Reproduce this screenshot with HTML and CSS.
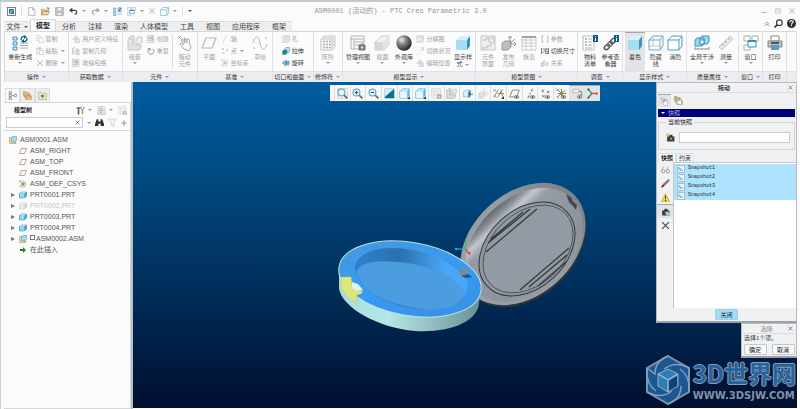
FILE: index.html
```html
<!DOCTYPE html>
<html lang="zh-CN">
<head>
  <meta charset="UTF-8">
  <title>ASM0001 (活动的) - PTC Creo Parametric 3.0</title>
  <link rel="stylesheet" href="styles.css">
</head>
<body>

<!-- icon set -->
<svg class="sprite" aria-hidden="true">
  <symbol id="i-app" viewBox="0 0 16 16"><rect x="1" y="1" width="14" height="14" fill="#fff" stroke="#667" stroke-width="1.5"/><rect x="4" y="4" width="8" height="8" fill="#2d9fd8" stroke="#234a70"/><path d="M4 12l4-4" stroke="#fff"/></symbol>
  <symbol id="i-new" viewBox="0 0 16 16"><path d="M3 1h7l4 4v10H3zM10 1v4h4" fill="#fff" stroke="#888"/></symbol>
  <symbol id="i-open" viewBox="0 0 16 16"><path d="M1 14V4h4l2 2h6v3" fill="#f4c878" stroke="#8f7040"/><path d="M1 14l3-6h11l-3 6z" fill="#f9d894" stroke="#8f7040"/><path d="M9 3c2-3 4-2 5 0m0-2v3h-3" fill="none" stroke="#555"/></symbol>
  <symbol id="i-save" viewBox="0 0 16 16"><path d="M1 1h14v14H1z" fill="#c9cbcd" stroke="#999"/><path d="M4 1h8v6H4zM4 10h8v5H4z" fill="#f4f4f4" stroke="#999"/></symbol>
  <symbol id="i-undo" viewBox="0 0 16 16"><path d="M3 6h7c5 0 5 7 0 7" fill="none" stroke="#3b3f45" stroke-width="2"/><path d="M0 6l6-5v9z" fill="#3b3f45"/></symbol>
  <symbol id="i-redo" viewBox="0 0 16 16"><path d="M13 6H6c-5 0-5 7 0 7" fill="none" stroke="#aaa" stroke-width="2"/><path d="M16 6l-6-5v9z" fill="#aaa"/></symbol>
  <symbol id="i-regen" viewBox="0 0 16 16"><path d="M1 2h4v3H1zM1 7h4v3H1zM1 12h4v3H1z" fill="#d4effb" stroke="#3890bd"/><path d="M8 8h8M8 10.5h8M8 13h8" stroke="#a5aaae"/><path d="M9 5c0-4 3-4 4-3M15 3c0 4-3 4-5 3" fill="none" stroke="#08618c" stroke-width="1.3"/><path d="M12 0l3 2-3 2zM12 4l-3 2 3 2z" fill="#08618c"/></symbol>
  <symbol id="i-copy" viewBox="0 0 16 16"><path d="M1 1h7l2 2v8H1z" fill="#f3f3f3" stroke="#b3b5b8"/><path d="M6 6h6l3 3v6H6z" fill="#fff" stroke="#9c9fa3"/></symbol>
  <symbol id="i-paste" viewBox="0 0 16 16"><path d="M1 3h11v11H1zM4 1h5v3H4z" fill="#eee" stroke="#aaa"/><path d="M7 7h8v8H7z" fill="#fff" stroke="#999"/></symbol>
  <symbol id="i-x" viewBox="0 0 16 16"><path d="M2 2l12 12M14 2L2 14" stroke="currentColor" stroke-width="2"/></symbol>
  <symbol id="i-feature" viewBox="0 0 16 16"><path d="M1 8h5V4h5v4M5 1l4 3-4 4" fill="none" stroke="#aaa" stroke-width="1.5"/><path d="M6 8h9v7H6z" fill="#ddd" stroke="#aaa"/></symbol>
  <symbol id="i-geom" viewBox="0 0 16 16"><path d="M1 15V2h7M4 5v9M8 6h6v9H8zM11 2v8M8 12h6" fill="none" stroke="#a0a3a6" stroke-width="1.5"/></symbol>
  <symbol id="i-shrink" viewBox="0 0 16 16"><path d="M1 1h13v14H1z" fill="#eee" stroke="#999"/><path d="M4 4h5v4H4zM4 11h5M11 3v9" fill="none" stroke="#888" stroke-width="1.5"/></symbol>
  <symbol id="i-assemble" viewBox="0 0 16 16"><path d="M1 4l3-3h3v9h7v3l-2 2H1z" fill="#d8dadc" stroke="#b2b5b8"/><path d="M9 4l2-2h4v5l-2 2H9zM1 4h4v7" fill="#ececec" stroke="#b2b5b8"/></symbol>
  <symbol id="i-repeat" viewBox="0 0 16 16"><path d="M4 4a6 6 0 1 0 8 0" fill="none" stroke="#777" stroke-width="2"/><path d="M1 2h6v6z" fill="#777"/></symbol>
  <symbol id="i-hand" viewBox="0 0 16 16"><path d="M7 14L3 9l1-1 3 2-3-5 1-1 3 4-1-5h1l2 5v-4h2l1 6 1 2-2 4z" fill="#fff" stroke="#888"/><path d="M1 1l3 3M4 1L1 4" stroke="#888"/></symbol>
  <symbol id="i-plane" viewBox="0 0 16 16"><path d="M5 3h10l-4 10H1z" fill="none" stroke="currentColor" stroke-width="1.2"/></symbol>
  <symbol id="i-axis" viewBox="0 0 16 16"><path d="M4 15l2-4M7 9l1-2M9 5l2-4" stroke="currentColor" stroke-width="1.5"/></symbol>
  <symbol id="i-point" viewBox="0 0 16 16"><path d="M2 2l4 4M6 2L2 6M10 4l4 4M14 4l-4 4M3 10l4 4M7 10l-4 4" stroke="currentColor" stroke-width="1.3"/></symbol>
  <symbol id="i-csys" viewBox="0 0 16 16"><path d="M8 8V1M8 8l6-5M8 8h7M8 8l5 6M8 8v7M8 8l-6 5M8 8H3M8 8L3 3M1 1l3 3M4 1L1 4M1 12l3 3" stroke="currentColor" stroke-width="1.3" fill="none"/></symbol>
  <symbol id="i-datums" viewBox="0 0 16 16"><path d="M1 2l3 3M4 2L1 5M1 14L8 2M6 14l8-12M7 8h9M11 4l4 10M1 10l3 3" stroke="currentColor" stroke-width="1.2" fill="none"/></symbol>
  <symbol id="i-sketch" viewBox="0 0 16 16"><path d="M1 8C3-1 7 1 8 8s5 9 7 1" fill="none" stroke="#999"/><path d="M1 13h2M13 3h2" stroke="#999"/></symbol>
  <symbol id="i-hole" viewBox="0 0 16 16"><path d="M1 4l3-3h11v11l-3 3H1zM1 4h11v11M12 4l3-3" fill="#eee" stroke="#aaa"/><path d="M5 5v9M8 5v9" stroke="#aaa"/></symbol>
  <symbol id="i-extrude" viewBox="0 0 16 16"><path d="M5 4l3-3h7v8l-3 3H5z" fill="#b9e4f6" stroke="#447f9d"/><path d="M1 8l3-2h6v6l-3 3H1z" fill="#1686bb" stroke="#55707d"/></symbol>
  <symbol id="i-revolve" viewBox="0 0 16 16"><path d="M6 3l4 5-4 5-5-5zM9 4h5v8H9z" fill="#8fd0ed" stroke="#39799a"/><path d="M8 1v14M1 8h14" stroke="#277ba3"/></symbol>
  <symbol id="i-cut" viewBox="0 0 16 16"><path d="M2 6l3-3h7v7l-3 3H2z" fill="#d5f0fb" stroke="#7fb3c9"/><path d="M12 3v10l-3 1V6z" fill="#2a7fa3"/><path d="M16 9h-5m2-2l-2 2 2 2" fill="none" stroke="#444"/></symbol>
  <symbol id="i-pattern" viewBox="0 0 16 16"><path d="M1 4l3-3h11v11l-3 3H1z" fill="#ddd" stroke="#c0c0c0"/><path d="M1 4h11v11H1z" fill="#f4f4f4" stroke="#c0c0c0"/><path d="M3 6.5h2M6 6.5h2M9 6.5h2M3 9.5h2M6 9.5h2M9 9.5h2M3 12.5h2M6 12.5h2M9 12.5h2" stroke="#999" stroke-width="1.5"/></symbol>
  <symbol id="i-viewmgr" viewBox="0 0 16 16"><path d="M1 1h13v13H1zM1 4h13M4 4v10M4 7h10M4 10h10" fill="#fafafa" stroke="#b0b3b6"/><path d="M9 10h6v5H9zM11 9h2" fill="#777" stroke="#777"/><circle cx="12" cy="12.5" r="1.3" fill="#ddd"/></symbol>
  <symbol id="i-section" viewBox="0 0 16 16"><path d="M1 7l7-6h7v9l-5 5H1z" fill="#eee" stroke="#bbb"/><path d="M1 7h8v8H1z" fill="#ccc"/><path d="M9 7l6-6v9l-6 5z" fill="#ddd"/></symbol>
  <symbol id="i-sphere" viewBox="0 0 16 16"><circle cx="8" cy="8" r="7.7" fill="url(#ball)"/></symbol>
  <symbol id="i-cube" viewBox="0 0 16 16"><path d="M1 5l4-4h10v10l-3 4H1z" fill="#5fb7df"/><path d="M1 5l4-4h10l-3 4z" fill="#bceaf9"/><path d="M1 5h11v10H1z" fill="#e6f7fd"/><path d="M1 5l4-4h10v10l-3 4H1z" fill="none" stroke="#58a7cb" stroke-width=".7"/></symbol>
  <symbol id="i-shaded" viewBox="0 0 16 16"><path d="M1 5l4-4h10l-3 4z" fill="#d3f2fc"/><path d="M1 5h11v10H1z" fill="#a5def3"/><path d="M12 5l3-4v10l-3 4z" fill="#3a94b8"/></symbol>
  <symbol id="i-wire" viewBox="0 0 16 16"><path d="M1 5l4-4h10v10l-3 4H1zM1 5h11v10M12 5l3-4" fill="none" stroke="#6aaecb"/><path d="M5 1v10H1m4 0h10" fill="none" stroke="#b5b5b5" stroke-width=".7"/></symbol>
  <symbol id="i-nohid" viewBox="0 0 16 16"><path d="M1 5l4-4h10v10l-3 4H1zM1 5h11v10M12 5l3-4" fill="#fff" stroke="#4f9fc3"/></symbol>
  <symbol id="i-iface" viewBox="0 0 16 16"><path d="M1 1h14v14H1z" fill="#ebebeb" stroke="#b6b8ba"/><path d="M2 5h4V3h3v4h2v4H7v2H2M10 3h4v6" fill="none" stroke="#aaa"/></symbol>
  <symbol id="i-publish" viewBox="0 0 16 16"><path d="M1 8l3-2h6v6l-3 3H1z" fill="#aaa" stroke="#777"/><path d="M9 9h6M9 9V1M9 9l5-5M7 3l2-2 2 2M13 7l2 2-2 2" fill="none" stroke="#777"/></symbol>
  <symbol id="i-table" viewBox="0 0 16 16"><path d="M1 2h14v13H1zM1 5h14M1 8h14M1 11h14M5 2v13M10 2v13" fill="#fff" stroke="#bbb"/><path d="M1 2h14" stroke="#888" stroke-width="2"/></symbol>
  <symbol id="i-param" viewBox="0 0 16 16"><path d="M5 2H2v12h3M11 2h3v12h-3" fill="none" stroke="#888" stroke-width="1.5"/></symbol>
  <symbol id="i-dims" viewBox="0 0 16 16"><path d="M1 2v12M15 2v12M3 4h10M3 12l9-9M9 8h5v5H9z" fill="none" stroke="#555" stroke-width="1.5"/></symbol>
  <symbol id="i-rel" viewBox="0 0 16 16"><path d="M6 2v12M6 8H1v6h5M9 8h6M9 12h6" fill="none" stroke="#888" stroke-width="1.5"/></symbol>
  <symbol id="i-bom" viewBox="0 0 16 16"><path d="M1 1h11v14H1z" fill="#fff" stroke="#bbb"/><path d="M3 4h2M3 7h2M3 10h2" stroke="#258bb7"/><path d="M6 4h4M6 7h4M6 10h4M3 13h7" stroke="#aaa"/><path d="M11 0h5v7h-5z" fill="#075f82"/><path d="M13.5 1v1m0 1v3" stroke="#fff"/></symbol>
  <symbol id="i-chain" viewBox="0 0 16 16"><ellipse cx="4" cy="12" rx="3" ry="2" transform="rotate(-45 4 12)" fill="none" stroke="#555" stroke-width="1.5"/><ellipse cx="7" cy="9" rx="3" ry="2" transform="rotate(-45 7 9)" fill="none" stroke="#777" stroke-width="1.5"/><ellipse cx="10" cy="6" rx="3" ry="2" transform="rotate(-45 10 6)" fill="none" stroke="#555" stroke-width="1.5"/><path d="M11 0h5v7h-5z" fill="#075f82"/><path d="M13.5 1v1m0 1v3" stroke="#fff"/></symbol>
  <symbol id="i-clash" viewBox="0 0 16 16"><path d="M1 5l2-2h7v6l-2 2H1zM6 3l2-2h7v6l-2 2H6z" fill="#98d9f1" stroke="#3c93b9"/><path d="M6 5h4v4H6z" fill="#fff" stroke="#3c93b9"/><path d="M1 14h14M1 12v3M4 13v2M8 13v2M12 13v2M15 12v3" stroke="#999"/></symbol>
  <symbol id="i-ruler" viewBox="0 0 16 16"><path d="M1 12L12 1l3 3L4 15z" fill="#e9e9e9" stroke="#c5c5c5"/><path d="M4 9l2 2M7 6l2 2M10 3l2 2" stroke="#aaa"/></symbol>
  <symbol id="i-windows" viewBox="0 0 16 16"><path d="M1 1h6v5H1zM9 1h6v5H9zM1 10h6v5H1z" fill="#fff" stroke="#aaa"/><path d="M5 6h8v6H5z" fill="#f4fbff" stroke="#2f91bc"/><path d="M5 6h8" stroke="#2f91bc" stroke-width="2"/></symbol>
  <symbol id="i-print" viewBox="0 0 16 16"><path d="M4 1h8v5H4z" fill="#fff" stroke="#888"/><path d="M1 6h14v6H1z" fill="#b8bcc0" stroke="#888"/><path d="M4 8h8" stroke="#555" stroke-width="2"/><path d="M4 10h8v5H4z" fill="#4fa0c4"/></symbol>
  <symbol id="i-asm" viewBox="0 0 16 16"><path d="M1 3h9v10h4v2H1z" fill="#f6d590" stroke="#a88c4e"/><path d="M5 4l2-3h8v8l-3 3H5z" fill="#9bdbf5" stroke="#4b91b2"/></symbol>
  <symbol id="i-part" viewBox="0 0 16 16"><path d="M1 5l4-3h10v8l-4 4H1z" fill="#3a96be"/><path d="M1 5h10v9H1z" fill="#8fdbfa"/><path d="M1 5l4-3h10l-4 3z" fill="#d5f5ff"/><path d="M1 5l4-3h10v8l-4 4H1z" fill="none" stroke="#3785a6"/></symbol>
  <symbol id="i-insert" viewBox="0 0 16 16"><path d="M2 6h6V2l6 6-6 6v-4H2z" fill="#159315"/><path d="M2 6h3v4H2z" fill="#0b5c0b"/></symbol>
  <symbol id="i-tree" viewBox="0 0 16 16"><path d="M4 2v12M4 8h7" stroke="#777"/><path d="M2 0h4v4H2zM2 6h4v4H2zM2 12h4v4H2zM11 6h4v4h-4z" fill="#fff" stroke="#555"/></symbol>
  <symbol id="i-folders" viewBox="0 0 16 16"><path d="M1 1h4l1 2h5v6H1zM3 4h4l1 2h5v6H3zM5 8h4l1 1h5v6H5z" fill="#f7d38a" stroke="#a58a55"/></symbol>
  <symbol id="i-fav" viewBox="0 0 16 16"><path d="M1 2h5l2 2h7v11H1z" fill="#f9e5b5" stroke="#b79c61"/><path d="M5 9h6M8 6v6" stroke="#258bb7" stroke-width="2.5"/></symbol>
  <symbol id="i-tools" viewBox="0 0 16 16"><path d="M1 2h7v3H6v10H3V5H1z" fill="#666"/><path d="M10 7h3v8h-3z" fill="#d79b45"/><path d="M9 1v4l2 2 3-2V1" fill="none" stroke="#777" stroke-width="1.5"/></symbol>
  <symbol id="i-sheet" viewBox="0 0 16 16"><path d="M2 1h9l3 3v11H2z" fill="#f1f4f6" stroke="#9aa0a5"/><path d="M4 5h8M4 8h8M4 11h8M7 4v10" stroke="#8ba0ad"/></symbol>
  <symbol id="i-find" viewBox="0 0 16 16"><path d="M3 2h3v4h4V2h3l3 9v3h-6v-4H6v4H0v-3z" fill="#333"/></symbol>
  <symbol id="i-filter" viewBox="0 0 16 16"><path d="M1 2h14l-5 6v7l-4-2V8z" fill="#f6f6f6" stroke="#bbb"/></symbol>
  <symbol id="i-plus" viewBox="0 0 16 16"><path d="M1 8h14M8 1v14" stroke="#999" stroke-width="3"/></symbol>
  <symbol id="i-lens" viewBox="0 0 16 16"><path d="M10 10l5 5" stroke="#566b78" stroke-width="2.5"/><circle cx="6.5" cy="6.5" r="5" fill="#e5f5fb" stroke="#5d9db9" stroke-width="1.5"/></symbol>
  <symbol id="i-refit" viewBox="0 0 16 16"><path d="M1 1h14v14H1z" fill="none" stroke="#bbb"/></symbol>
  <symbol id="i-plusmark" viewBox="0 0 16 16"><path d="M4 6.5h5M6.5 4v5" stroke="#08618c" stroke-width="1.6"/></symbol>
  <symbol id="i-minusmark" viewBox="0 0 16 16"><path d="M4 6.5h5" stroke="#08618c" stroke-width="1.6"/></symbol>
  <symbol id="i-repaint" viewBox="0 0 16 16"><path d="M1 1h14v14H1z" fill="#0c6f9b"/><path d="M1 1h14L1 13z" fill="#d7edf5"/></symbol>
  <symbol id="i-eye" viewBox="0 0 16 16"><path d="M7 13c2-3 6-3 8 0-2 3-6 3-8 0" fill="#eee" stroke="#666"/><circle cx="11" cy="13" r="1.5" fill="#444"/></symbol>
  <symbol id="i-more" viewBox="0 0 16 16"><path d="M16 12v4h-4z" fill="#222"/></symbol>
  <symbol id="i-triad" viewBox="0 0 16 16"><path d="M7 8h7" stroke="#d45048" stroke-width="2"/><path d="M7 8L2 2" stroke="#5a8c3c" stroke-width="2"/><path d="M7 8l-5 6" stroke="#28809a" stroke-width="2"/><circle cx="2" cy="2" r="1.5" fill="#555"/><circle cx="2" cy="14" r="1.5" fill="#555"/><circle cx="14" cy="8" r="1.8" fill="#d45048"/></symbol>
  <symbol id="i-note" viewBox="0 0 16 16"><path d="M1 2h9v5H1z" fill="#fbf2d3" stroke="#aaa"/><path d="M10 5h4v5m-3 0h4" fill="none" stroke="#666"/></symbol>
  <symbol id="i-camera" viewBox="0 0 16 16"><path d="M2 6h3l2-3h4l1 3h3v9H2z" fill="#3c3c3e"/><circle cx="9" cy="10" r="3" fill="#999" stroke="#222"/></symbol>
  <symbol id="i-drawing" viewBox="0 0 16 16"><path d="M9 9h7v7H9z" fill="#9fdaf2" stroke="#4f8ba3"/><path d="M9 9h3v3H9z" fill="#f5c66c"/></symbol>
  <symbol id="i-spark" viewBox="0 0 16 16"><path d="M3 0v6M0 3h6M1 1l4 4M5 1L1 5" stroke="#f0a020"/></symbol>
  <symbol id="i-glasses" viewBox="0 0 16 16"><circle cx="4" cy="11" r="3" fill="none" stroke="#888" stroke-width="1.3"/><circle cx="12" cy="11" r="3" fill="none" stroke="#888" stroke-width="1.3"/><path d="M1 11L4 3M9 11l4-8" fill="none" stroke="#888"/></symbol>
  <symbol id="i-pencil" viewBox="0 0 16 16"><path d="M1 15l2-5L13 1l2 2-9 9z" fill="#b56a62" stroke="#6b4a48"/><path d="M1 15l2-5 3 2z" fill="#333"/></symbol>
  <symbol id="i-warn" viewBox="0 0 16 16"><path d="M8 1l7 14H1z" fill="#ffd248" stroke="#c39018"/><path d="M8 5v5m0 2v2" stroke="#333" stroke-width="1.8"/></symbol>
  <symbol id="i-snap" viewBox="0 0 16 16"><path d="M1 1h14v14H1z" fill="#e8f7fd" stroke="#6897a8"/><path d="M4 4v4h4M8 8l4 4M5 11h3" fill="none" stroke="#4f7480" stroke-width="1.3"/></symbol>
  <symbol id="i-min" viewBox="0 0 16 16"><path d="M1 12h14" stroke="#bbb" stroke-width="3"/></symbol>
  <symbol id="i-max" viewBox="0 0 16 16"><path d="M1 2h14v12H1zM1 5h14M4 9h8" fill="none" stroke="#bbb" stroke-width="1.6"/></symbol>
  <symbol id="i-close" viewBox="0 0 16 16"><path d="M1 2h14v12H1z" fill="none" stroke="#bbb"/><path d="M4 4l8 8M12 4l-8 8" stroke="#999" stroke-width="2"/></symbol>
  <symbol id="i-up" viewBox="0 0 16 16"><path d="M2 8l6-5 6 5M2 13l6-5 6 5" fill="none" stroke="#666" stroke-width="1.5"/></symbol>
  <symbol id="i-search" viewBox="0 0 16 16"><path d="M6 10l-5 5" stroke="#333" stroke-width="3"/><circle cx="9.500" cy="6.500" r="5" fill="#fff" stroke="#333" stroke-width="2"/></symbol>
  <symbol id="i-help" viewBox="0 0 16 16"><circle cx="8" cy="8" r="8" fill="#2b2b2d"/><path d="M5 6c0-4 6-4 6-1 0 2-3 2-3 5m0 1v2" fill="none" stroke="#fff" stroke-width="2"/></symbol>
  <defs>
    <radialGradient id="ball" cx=".35" cy=".3" r=".7"><stop offset="0" stop-color="#eee"/><stop offset=".4" stop-color="#888"/><stop offset="1" stop-color="#2b2b2b"/></radialGradient>
  </defs>
</svg>

<div class="app">
  <header class="titlebar">
    <div class="quick">
      <button aria-label="应用"><svg class="ico"><use href="#i-app"/></svg></button>
      <span class="rule"></span>
      <button aria-label="新建"><svg class="ico"><use href="#i-new"/></svg></button>
      <button aria-label="打开"><svg class="ico"><use href="#i-open"/></svg></button>
      <button aria-label="保存"><svg class="ico"><use href="#i-save"/></svg></button>
      <button aria-label="撤消"><svg class="ico"><use href="#i-undo"/></svg><i class="arrow"></i></button>
      <button aria-label="重做"><svg class="ico"><use href="#i-redo"/></svg><i class="arrow"></i></button>
      <button aria-label="重新生成"><svg class="ico"><use href="#i-regen"/></svg></button>
      <button aria-label="窗口"><svg class="ico"><use href="#i-windows"/></svg><i class="arrow"></i></button>
      <button aria-label="关闭窗口"><svg class="ico small"><use href="#i-close"/></svg></button>
      <button aria-label="显示"><svg class="ico"><use href="#i-nohid"/></svg><i class="arrow"></i></button>
      <span class="rule"></span>
      <button aria-label="自定义"><i class="arrow dark"></i></button>
    </div>
    <h1 class="title">ASM0001 (活动的) - PTC Creo Parametric 3.0</h1>
    <div class="winbtns">
      <button aria-label="最小化"><svg class="ico small"><use href="#i-min"/></svg></button>
      <button aria-label="最大化"><svg class="ico small"><use href="#i-max"/></svg></button>
      <button aria-label="关闭"><svg class="ico small"><use href="#i-close"/></svg></button>
    </div>
  </header>

  <nav class="tabs">
    <button class="tab file">文件<i class="arrow dark"></i></button>
    <button class="tab active">模型</button>
    <button class="tab">分析</button>
    <button class="tab">注释</button>
    <button class="tab">渲染</button>
    <button class="tab wide">人体模型</button>
    <button class="tab">工具</button>
    <button class="tab">视图</button>
    <button class="tab wide">应用程序</button>
    <button class="tab">框架</button>
    <div class="help">
      <button aria-label="最小化功能区"><svg class="ico small"><use href="#i-up"/></svg></button>
      <button aria-label="搜索"><svg class="ico"><use href="#i-search"/></svg></button>
      <button aria-label="帮助"><svg class="ico"><use href="#i-help"/></svg></button>
    </div>
  </nav>

  <div class="ribbon">
    <section class="group">
      <div class="tools">
        <button class="big on"><svg><use href="#i-regen"/></svg>重新生成<i class="arrow"></i></button>
        <div class="stack">
          <button><svg><use href="#i-copy"/></svg>复制</button>
          <button><svg><use href="#i-paste"/></svg>粘贴<i class="arrow"></i></button>
          <button><svg><use href="#i-x"/></svg>删除<i class="arrow"></i></button>
        </div>
      </div>
      <button class="caption">操作<i class="arrow"></i></button>
    </section>
    <section class="group">
      <div class="tools">
        <div class="stack">
          <button><svg><use href="#i-feature"/></svg>用户定义特征</button>
          <button><svg><use href="#i-geom"/></svg>复制几何</button>
          <button><svg><use href="#i-shrink"/></svg>收缩包络</button>
        </div>
      </div>
      <button class="caption">获取数据<i class="arrow"></i></button>
    </section>
    <section class="group">
      <div class="tools">
        <button class="big"><svg><use href="#i-assemble"/></svg>组装<i class="arrow"></i></button>
        <div class="stack">
          <button><svg><use href="#i-shrink"/></svg>创建</button>
          <button><svg><use href="#i-repeat"/></svg>重复</button>
        </div>
        <span class="rule tall"></span>
        <button class="big"><svg><use href="#i-hand"/></svg>拖动<br>元件</button>
      </div>
      <button class="caption">元件<i class="arrow"></i></button>
    </section>
    <section class="group">
      <div class="tools">
        <button class="big"><svg><use href="#i-plane"/></svg>平面</button>
        <div class="stack">
          <button><svg><use href="#i-axis"/></svg>轴</button>
          <button><svg><use href="#i-point"/></svg>点<i class="arrow"></i></button>
          <button><svg><use href="#i-csys"/></svg>坐标系</button>
        </div>
        <button class="big"><svg><use href="#i-sketch"/></svg>草绘</button>
      </div>
      <button class="caption">基准<i class="arrow"></i></button>
    </section>
    <section class="group">
      <div class="tools">
        <div class="stack">
          <button><svg><use href="#i-hole"/></svg>孔</button>
          <button class="on"><svg><use href="#i-extrude"/></svg>拉伸</button>
          <button class="on"><svg><use href="#i-revolve"/></svg>旋转</button>
        </div>
      </div>
      <button class="caption">切口和曲面<i class="arrow"></i></button>
    </section>
    <section class="group">
      <div class="tools">
        <button class="big"><svg><use href="#i-pattern"/></svg>阵列<i class="arrow"></i></button>
      </div>
      <button class="caption">修饰符<i class="arrow"></i></button>
    </section>
    <section class="group">
      <div class="tools">
        <button class="big on"><svg><use href="#i-viewmgr"/></svg>管理视图<i class="arrow"></i></button>
        <button class="big"><svg><use href="#i-section"/></svg>截面<i class="arrow"></i></button>
        <button class="big on"><svg><use href="#i-sphere"/></svg>外观库<i class="arrow"></i></button>
        <div class="stack">
          <button><svg><use href="#i-iface"/></svg>分解图</button>
          <button><svg><use href="#i-bom" opacity=".3"/></svg>切换状况</button>
          <button><svg><use href="#i-feature"/></svg>编辑位置</button>
        </div>
        <button class="big on"><svg><use href="#i-shaded"/></svg>显示样<br><span>式<i class="arrow"></i></span></button>
      </div>
      <button class="caption">模型显示<i class="arrow"></i></button>
    </section>
    <section class="group">
      <div class="tools">
        <button class="big"><svg><use href="#i-iface"/></svg>元件<br>界面</button>
        <button class="big"><svg><use href="#i-publish"/></svg>发布<br>几何</button>
        <button class="big"><svg><use href="#i-table"/></svg>族表</button>
        <div class="stack">
          <button><svg><use href="#i-param"/></svg>参数</button>
          <button class="on"><svg><use href="#i-dims"/></svg>切换尺寸</button>
          <button><svg><use href="#i-rel"/></svg>关系</button>
        </div>
      </div>
      <button class="caption">模型意图<i class="arrow"></i></button>
    </section>
    <section class="group">
      <div class="tools">
        <button class="big on"><svg><use href="#i-bom"/></svg>物料<br>清单</button>
        <button class="big on"><svg><use href="#i-chain"/></svg>参考查<br>看器</button>
      </div>
      <button class="caption">调查<i class="arrow"></i></button>
    </section>
    <section class="group">
      <div class="tools">
        <button class="big on pressed"><svg><use href="#i-shaded"/></svg>着色</button>
        <button class="big on"><svg><use href="#i-wire"/></svg>隐藏<br>线</button>
        <button class="big on"><svg><use href="#i-nohid"/></svg>消隐</button>
      </div>
      <button class="caption">显示样式<i class="arrow"></i></button>
    </section>
    <section class="group">
      <div class="tools">
        <button class="big on"><svg><use href="#i-clash"/></svg>全局干涉<i class="arrow"></i></button>
        <button class="big on"><svg><use href="#i-ruler"/></svg>测量<i class="arrow"></i></button>
      </div>
      <button class="caption">质量属性<i class="arrow"></i></button>
    </section>
    <section class="group">
      <div class="tools">
        <button class="big on"><svg><use href="#i-windows"/></svg>窗口<i class="arrow"></i></button>
      </div>
      <button class="caption">窗口<i class="arrow"></i></button>
    </section>
    <section class="group">
      <div class="tools">
        <button class="big on"><svg><use href="#i-print"/></svg>打印</button>
      </div>
      <button class="caption">打印</button>
    </section>
    <section class="group">
      <div class="tools"></div>
      <div class="caption"></div>
    </section>
  </div>

  <main class="work">
    <aside class="side">
      <div class="sidetabs">
        <button class="active" aria-label="模型树"><svg class="ico"><use href="#i-tree"/></svg></button>
        <button aria-label="文件夹"><svg class="ico"><use href="#i-folders"/></svg></button>
        <button aria-label="收藏夹"><svg class="ico"><use href="#i-fav"/></svg></button>
      </div>
      <div class="sidebody">
        <div class="sidehead">
          <h2>模型树</h2>
          <button aria-label="设置"><svg class="ico"><use href="#i-tools"/></svg><i class="arrow"></i></button>
          <button aria-label="显示"><svg class="ico"><use href="#i-sheet"/></svg><i class="arrow"></i></button>
          <button aria-label="树列"><svg class="ico"><use href="#i-viewmgr" opacity=".5"/></svg></button>
        </div>
        <div class="sidesearch">
          <div class="searchbox">
            <input type="text" aria-label="搜索模型树">
            <button aria-label="清除"><svg class="tiny"><use href="#i-x"/></svg></button>
          </div>
          <button aria-label="选项"><i class="arrow"></i></button>
          <button aria-label="查找"><svg class="ico"><use href="#i-find"/></svg></button>
          <button aria-label="过滤"><svg class="ico"><use href="#i-filter"/></svg></button>
          <button aria-label="添加"><svg class="ico small"><use href="#i-plus"/></svg></button>
        </div>
        <ul class="tree">
          <li class="root"><svg class="ico"><use href="#i-asm"/></svg>ASM0001.ASM</li>
          <li><i></i><svg class="ico datum"><use href="#i-plane"/></svg>ASM_RIGHT</li>
          <li><i></i><svg class="ico datum"><use href="#i-plane"/></svg>ASM_TOP</li>
          <li><i></i><svg class="ico datum"><use href="#i-plane"/></svg>ASM_FRONT</li>
          <li><i></i><svg class="ico datum"><use href="#i-csys"/></svg>ASM_DEF_CSYS</li>
          <li><i class="twist"></i><svg class="ico"><use href="#i-part"/></svg>PRT0001.PRT</li>
          <li class="off"><i class="twist"></i><svg class="ico"><use href="#i-part"/></svg><span>PRT0002.PRT</span></li>
          <li><i class="twist"></i><svg class="ico"><use href="#i-part"/></svg>PRT0003.PRT</li>
          <li><i class="twist"></i><svg class="ico"><use href="#i-part"/></svg>PRT0004.PRT</li>
          <li><i class="twist"></i><svg class="ico"><use href="#i-asm"/></svg><span class="placed">ASM0002.ASM</span></li>
          <li><i></i><svg class="ico"><use href="#i-insert"/></svg>在此插入</li>
        </ul>
      </div>
    </aside>

    <div class="view">
      <svg class="model" viewBox="133 82 664 326" preserveAspectRatio="xMidYMid meet" aria-hidden="true">
        <defs>
          <linearGradient id="rim" x1="0" y1="0" x2="1" y2="0"><stop offset="0" stop-color="#9aa1a9"/><stop offset=".6" stop-color="#949ba3"/><stop offset="1" stop-color="#7d838a"/></linearGradient>
          <linearGradient id="bowl" x1="0" y1="0" x2="0" y2="1"><stop offset="0" stop-color="#62686e"/><stop offset=".08" stop-color="#8a9097"/><stop offset=".15" stop-color="#c3c7cd"/><stop offset=".25" stop-color="#959ca4"/><stop offset=".8" stop-color="#8c939b"/><stop offset="1" stop-color="#979da5"/></linearGradient>
          <linearGradient id="wall" x1="0" y1="0" x2="1" y2="0"><stop offset="0" stop-color="#a8dcdf"/><stop offset=".35" stop-color="#b5e7e7"/><stop offset=".7" stop-color="#8db8bb"/><stop offset="1" stop-color="#668f94"/></linearGradient>
          <linearGradient id="top" x1="0" y1="0" x2="1" y2="1"><stop offset="0" stop-color="#4a97d8"/><stop offset=".5" stop-color="#369bf5"/><stop offset="1" stop-color="#3b8edc"/></linearGradient>
          <linearGradient id="pit" x1="0" y1="0" x2="1" y2="0"><stop offset="0" stop-color="#2b82cf"/><stop offset=".4" stop-color="#2b71ae"/><stop offset=".8" stop-color="#49a6f7"/></linearGradient>
        </defs>
        <!-- lid -->
        <ellipse cx="524" cy="246" rx="71" ry="51" transform="rotate(-43 524 246)" fill="#30353a"/>
        <ellipse cx="523" cy="244" rx="71" ry="51" transform="rotate(-43 523 244)" fill="url(#rim)"/>
        <ellipse cx="524" cy="245" rx="67" ry="47" transform="rotate(-43 524 245)" fill="url(#bowl)"/>
        <ellipse cx="527" cy="249" rx="54.500" ry="39" transform="rotate(-43 527 249)" fill="#8f979f" stroke="#33383d" stroke-width="1"/>
        <ellipse cx="528" cy="249" rx="51.500" ry="36" transform="rotate(-43 528 249)" fill="#929ba4" stroke="#44494e" stroke-width=".8"/>
        <path d="M486 252l51-43M488 243l42-34M491 239l32-27M520 290l49-42M529 287l38-32M538 286l28-24" stroke="#34393e" stroke-width="1.3" fill="none"/>
        <path d="M566 194l5 3 2 4 4 4-1 5-4-5-3-3z" fill="#44494e"/>
        <!-- base -->
        <path d="M339 273l0 15c2 19 39 40 76 43 36 2 63-10 64-28l2-17z" fill="url(#wall)"/>
        <ellipse cx="410" cy="279" rx="72" ry="36.500" transform="rotate(10 410 279)" fill="url(#top)" stroke="#b7e5e7"/>
        <path d="M355 270c-1-13 14-22 37-22 34 0 65 16 75 33 4 14-13 27-36 28-37 2-72-19-76-39z" fill="url(#pit)"/>
        <path d="M356 272c4-10 20-12 42-10 30 2 58 15 66 30 0 11-14 17-35 17-34-1-66-15-73-37z" fill="#4b9ddf"/>
        <path d="M457 268l11 1v5l-7 2-3-2 5-2z" fill="#84898a"/>
        <path d="M461 276l7-2 4 3-6 1z" fill="#1d5a94"/>
        <path d="M341 277h10l1 7 4 6 7 1-2 3-4 1-1 8-9-6-6-9z" fill="#d9e681" stroke="#b8c563" stroke-width=".5"/>
        <path d="M352 282l6 2 5 6-7 1-4-4z" fill="#dff1f2"/>
        <!-- triad -->
        <path d="M456 249l9 0" stroke="#2ab9c8"/><path d="M465 249l1-9" stroke="#38a978" stroke-width=".7"/><path d="M465 249l4 4" stroke="#b03e48"/>
        <circle cx="456" cy="249" r="1" fill="#39d4e4"/><rect x="465" y="239" width="2" height="3" fill="#20e23b"/><circle cx="469" cy="253" r="1.500" fill="#f0383d"/>
      </svg>

      <div class="viewbar">
        <button aria-label="重新调整"><svg><use href="#i-refit"/><use href="#i-lens"/></svg></button>
        <button aria-label="放大"><svg><use href="#i-lens"/><use href="#i-plusmark"/></svg></button>
        <button aria-label="缩小"><svg><use href="#i-lens"/><use href="#i-minusmark"/></svg></button>
        <button aria-label="重画"><svg><use href="#i-repaint"/></svg></button>
        <button aria-label="显示样式"><svg><use href="#i-cube"/><use href="#i-more"/></svg></button>
        <button aria-label="已保存方向"><svg><use href="#i-cube"/><use href="#i-more"/></svg></button>
        <button aria-label="视图管理器"><svg opacity=".6"><use href="#i-viewmgr"/></svg></button>
        <button aria-label="分解"><svg><use href="#i-assemble"/></svg></button>
        <button aria-label="截面"><svg><use href="#i-cut"/></svg></button>
        <button aria-label="方向"><svg opacity=".3"><use href="#i-publish"/></svg></button>
        <button class="datum" aria-label="基准显示"><svg><use href="#i-datums"/><use href="#i-more"/></svg></button>
        <button class="datum" aria-label="平面显示"><svg><use href="#i-plane"/><use href="#i-eye"/></svg></button>
        <button class="datum" aria-label="轴显示"><svg><use href="#i-axis"/><use href="#i-eye"/></svg></button>
        <button class="datum" aria-label="点显示"><svg><use href="#i-point"/><use href="#i-eye"/></svg></button>
        <button class="datum" aria-label="坐标系显示"><svg><use href="#i-csys"/><use href="#i-eye"/></svg></button>
        <button class="pressed" aria-label="注释显示"><svg><use href="#i-note"/><use href="#i-eye"/></svg></button>
        <button class="pressed" aria-label="旋转中心"><svg><use href="#i-triad"/></svg></button>
      </div>

      <div class="watermark">
        <svg viewBox="0 0 46 50" aria-hidden="true">
          <path d="M23 1l21 12v24L23 49 2 37V13z" fill="#1c5791" stroke="#8194ad" stroke-width="2"/>
          <path d="M23 1c-8 3-13 8-13 18L2 13M44 13c-9-5-17-5-25 1M44 37c1-10-2-18-9-23M23 49c8-3 13-8 13-18M2 37c9 5 17 5 25-1M2 13c-1 10 2 18 9 23" fill="none" stroke="#7f9fbe" stroke-width="1.500"/>
          <path d="M23 14l10 5v12l-10 6-10-6V19z" fill="#2f7db5" stroke="#8fb1cb"/>
          <path d="M13 19l10 6 10-6M23 25v12" fill="none" stroke="#8fb1cb" stroke-width="1.500"/>
          <path d="M24 26l8-5v10l-8 5z" fill="#12406f"/>
        </svg>
        <div>
          <b>3D世界网</b>
          <small>WWW.3DSJW.COM</small>
        </div>
      </div>

      <div class="dialogs">
        <section class="dialog drag">
          <header><h2>拖动</h2><button aria-label="关闭"><svg class="tiny"><use href="#i-x"/></svg></button></header>
          <div class="modes">
            <button class="pressed" aria-label="点拖动"><svg class="ico"><use href="#i-hand"/></svg></button>
            <button aria-label="主体拖动"><svg class="ico"><use href="#i-folders"/><use href="#i-hand"/></svg></button>
          </div>
          <button class="fold"><i class="arrow"></i>快照</button>
          <fieldset>
            <legend>当前快照</legend>
            <button aria-label="拍照"><svg class="ico"><use href="#i-camera"/><use href="#i-spark"/></svg></button>
            <input type="text" aria-label="当前快照">
          </fieldset>
          <div class="dtabs"><button class="active">快照</button><button>约束</button></div>
          <div class="snaps">
            <div class="snaptools">
              <button aria-label="显示"><svg class="ico"><use href="#i-glasses"/></svg></button>
              <button aria-label="编辑"><svg class="ico"><use href="#i-pencil"/></svg></button>
              <button aria-label="更新"><svg class="ico"><use href="#i-warn"/></svg></button>
              <button class="pressed" aria-label="绘图可用"><svg class="ico"><use href="#i-camera"/><use href="#i-drawing"/></svg></button>
              <button aria-label="删除"><svg class="ico"><use href="#i-x"/></svg></button>
            </div>
            <ul>
              <li><svg><use href="#i-snap"/></svg>Snapshot1</li>
              <li><svg><use href="#i-snap"/></svg>Snapshot2</li>
              <li><svg><use href="#i-snap"/></svg>Snapshot3</li>
              <li><svg><use href="#i-snap"/></svg>Snapshot4</li>
            </ul>
          </div>
          <footer><button class="push primary">关闭</button></footer>
        </section>
        <section class="dialog pick">
          <header><h2>选择</h2><button aria-label="关闭"><svg class="tiny"><use href="#i-x"/></svg></button></header>
          <p>选择1个项。</p>
          <footer><button class="push">确定</button><button class="push">取消</button></footer>
        </section>
      </div>
    </div>
  </main>
</div>

</body>
</html>
```
FILE: styles.css
```css
* {
  box-sizing: border-box;
}

body {
  margin: 0;
  font-family: "Liberation Sans", "Noto Sans CJK SC", sans-serif;
  font-size: 6px;
  line-height: 8px;
  color: #444;
  background: #fbfbfb;
}

button {
  display: flex;
  align-items: center;
  justify-content: center;
  padding: 0;
  border: 0;
  background: none;
  font: inherit;
  color: inherit;
  white-space: nowrap;
}

h1, h2, p, ul {
  margin: 0;
  padding: 0;
  font-size: inherit;
  list-style: none;
}

svg {
  display: block;
  flex: none;
}

.sprite {
  position: absolute;
  width: 0;
  height: 0;
}

.ico {
  width: 9px;
  height: 9px;
}

.small {
  width: 6px;
  height: 6px;
}

.tiny {
  width: 5px;
  height: 5px;
}

.arrow {
  margin-left: 3px;
  border: 2px solid transparent;
  border-top-color: #999;
  border-bottom: 0;
}

.arrow.dark {
  border-top-color: #555;
}

.rule {
  width: 1px;
  height: 10px;
  background: #ddd;
}

.app {
  display: flex;
  flex-direction: column;
  height: 100vh;
  padding-left: 3px;
  padding-right: 3px;
  border-top: 2px solid #c3c9cf;
  border-left: 1px solid #c9d0d8;
}

/* title bar */
.titlebar {
  display: grid;
  grid-template-columns: 1fr auto 1fr;
  align-items: center;
  height: 18px;
}

.quick {
  display: flex;
  align-items: center;
  gap: 5px;
  padding-left: 3px;
}

.quick .arrow {
  margin-left: 4px;
}

.quick .rule + button > .arrow {
  margin-left: 0;
}

.title {
  font: 7px/10px "Liberation Mono", "Noto Sans CJK SC", monospace;
  color: #999;
}

.winbtns, .help {
  display: flex;
  justify-content: flex-end;
  align-items: center;
  gap: 8px;
  padding-right: 2px;
}

/* tabs */
.tabs {
  display: flex;
  align-items: flex-end;
  height: 11px;
  font-size: 7px;
  color: #444;
}

.tab {
  width: 26px;
  height: 10px;
  background: #eceef0;
  border-top: 1px solid #dcdfe2;
}

.tab.wide {
  width: 40px;
}

.tab.active {
  height: 12px;
  font-weight: bold;
  color: #222;
  background: #fbfbfb;
  border: 1px solid #d5d8db;
  border-bottom: 0;
}

.help {
  flex: 1;
  gap: 4px;
  height: 15px;
  padding-right: 1px;
}

/* ribbon */
.ribbon {
  display: grid;
  grid-template-columns: 64fr 54fr 75fr 75fr 41fr 29fr 134fr 102fr 45fr 64fr 52fr 24fr 24fr 10fr;
  flex: none;
  border-top: 1px solid #d5d8db;
  border-left: 1px solid #d5d8db;
}

.group {
  display: flex;
  flex-direction: column;
  min-width: 0;
  border-right: 1px solid #dfe1e4;
}

.tools {
  display: flex;
  justify-content: space-evenly;
  height: 39px;
  color: #a2a2a2;
}

.tools button:not(.on) svg {
  opacity: .75;
}

.tools .on {
  color: #3c3c3c;
}

.big {
  flex-direction: column;
  justify-content: flex-start;
  min-width: 18px;
  padding-top: 3px;
  line-height: 7px;
}

.big > svg {
  width: 16px;
  height: 16px;
  margin-bottom: 3px;
}

.big > .arrow {
  margin: 1px 0 0;
}

.big span {
  display: flex;
  align-items: center;
}

.pressed {
  background: #e2e4e7;
  border-top: 1px solid #a5a8ac;
}

.big.pressed {
  min-width: 20px;
  padding-top: 2px;
}

.stack {
  display: flex;
  flex-direction: column;
  padding-top: 1px;
}

.stack button {
  justify-content: flex-start;
  height: 12px;
}

.stack svg {
  width: 8px;
  height: 8px;
  margin-right: 2px;
}

.rule.tall {
  height: 34px;
  margin-top: 2px;
}

.caption {
  height: 11px;
  background: #ebedf0;
  border-top: 1px solid #dfe1e4;
  color: #333;
}

/* work area */
.work {
  display: flex;
  flex: 1;
  min-height: 0;
}

.side {
  display: flex;
  flex-direction: column;
  flex: none;
  width: 129px;
  padding-top: 6px;
  border-right: 2px solid #b4bfc8;
}

.sidetabs {
  display: flex;
  padding-left: 1px;
}

.sidetabs button {
  width: 15px;
  height: 14px;
  background: #eceef0;
  border: 1px solid #dcdfe2;
  border-bottom: 0;
}

.sidetabs .active {
  background: #fbfbfb;
}

.sidebody {
  flex: 1;
  border: 1px solid #d5d8db;
  border-width: 1px 1px 1px 0;
}

.sidehead {
  display: flex;
  align-items: center;
  gap: 5px;
  height: 14px;
  padding: 0 3px 0 10px;
}

.sidehead h2 {
  flex: 1;
  color: #222;
}

.sidesearch {
  display: flex;
  align-items: center;
  gap: 4px;
  height: 14px;
  padding: 0 3px 2px 2px;
  border-bottom: 1px solid #d5d8db;
}

.sidesearch .arrow {
  margin-left: 0;
}

.searchbox {
  display: flex;
  flex: 1;
  min-width: 0;
  height: 11px;
  padding-right: 2px;
  border: 1px solid #c9ccd0;
  background: #fff;
}

input {
  flex: 1;
  min-width: 0;
  padding: 0 2px;
  border: 0;
  font: inherit;
}

.tree {
  padding: 3px 0 0 5px;
  font: 7px/11px "Liberation Sans", "Noto Sans CJK SC", sans-serif;
  color: #555;
}

.tree li {
  display: flex;
  align-items: center;
  gap: 3px;
  height: 11px;
}

.tree .ico {
  width: 8px;
  height: 8px;
}

.tree i {
  width: 7px;
}

.tree .twist {
  width: 4px;
  margin: 0 1px 0 2px;
  border: 2px solid transparent;
  border-left: 4px solid #777;
  border-right: 0;
}

/* small box mark before a placed subassembly */
.placed {
  display: flex;
  gap: 1px;
}

.placed::before {
  content: "";
  width: 3px;
  height: 3px;
  margin-top: 2px;
  border: 1px solid #777;
}

.off {
  color: #c5c5c5;
}

.off .ico {
  opacity: .4;
  filter: grayscale(1);
}

.datum {
  color: #88704a;
}

.view {
  position: relative;
  flex: 1;
  min-width: 0;
  margin-bottom: 1px;
  background: linear-gradient(#005c9f, #004a80 30%, #002c58 65%, #000f30);
}

.model {
  position: absolute;
  width: 100%;
  height: 100%;
}

.viewbar {
  position: relative;
  display: grid;
  grid-template-columns: repeat(17, 1fr);
  width: 270px;
  height: 16px;
  margin: 3px auto 0;
  padding-left: 4px;
  background: #f7f8f9;
}

.viewbar button {
  border-left: 1px solid #dcdfe2;
}

.viewbar svg {
  width: 11px;
  height: 11px;
}

.watermark {
  position: absolute;
  right: 1px;
  bottom: 3px;
  display: flex;
  align-items: flex-start;
  gap: 2px;
}

.watermark svg {
  width: 46px;
  height: 50px;
}

.watermark b {
  display: block;
  font: bold 24px/36px "Noto Sans CJK SC", sans-serif;
  color: #2263a0;
  text-shadow: 1px 0 #8d9bb0, -1px 0 #8d9bb0, 0 1px #8d9bb0, 0 -1px #8d9bb0;
}

.watermark small {
  display: block;
  font: bold 10px/10px "DejaVu Sans", sans-serif;
  color: #8292aa;
}

/* dialogs */
.dialogs {
  position: absolute;
  top: 0;
  right: 0;
  display: flex;
  flex-direction: column;
  align-items: flex-end;
}

.dialog {
  background: #eff1f3;
  border: 1px solid #b7bbc0;
  border-bottom: 2px solid #9da1a6;
}

.dialog header {
  display: flex;
  align-items: center;
  height: 10px;
  padding: 0 3px;
  border-bottom: 1px solid #dcdfe2;
}

.dialog h2 {
  flex: 1;
  text-align: center;
  color: #333;
}

.drag {
  width: 141px;
}

.modes {
  display: flex;
  gap: 1px;
  height: 16px;
  padding: 1px 1px 2px;
}

.modes button {
  width: 13px;
}

.fold {
  justify-content: flex-start;
  gap: 3px;
  width: calc(100% - 2px);
  height: 8px;
  margin-left: 1px;
  background: #00007c;
  color: #a8b5e0;
}

.fold .arrow {
  border-top-color: #fff;
}

fieldset {
  display: flex;
  align-items: center;
  gap: 4px;
  height: 32px;
  margin: 1px 1px 3px;
  padding: 0 4px 0 7px;
  border: 1px solid #d3d6d9;
}

legend {
  padding: 0 2px;
  color: #222;
}

fieldset input {
  height: 11px;
  border: 1px solid #c9ccd0;
  background: #fff;
}

.dtabs {
  display: flex;
  padding-left: 1px;
}

.dtabs button {
  width: 18px;
  height: 9px;
  border: 1px solid #dcdfe2;
  border-bottom: 0;
}

.dtabs .active {
  font-weight: bold;
  background: #fbfbfb;
  color: #222;
}

.snaps {
  display: flex;
  height: 146px;
  background: #eff1f3;
}

.snaptools {
  width: 16px;
}

.snaptools button {
  width: 100%;
  height: 14px;
}

.snaps ul {
  flex: 1;
  padding-top: 1px;
  border-left: 1px solid #c3c7cb;
  border-top: 1px solid #c3c7cb;
  background: #fff;
}

.snaps li {
  display: flex;
  align-items: center;
  gap: 3px;
  height: 9px;
  padding-left: 3px;
  background: #ade3ff;
  font: 5px/9px "Liberation Mono", monospace;
  color: #222;
}

.snaps li svg {
  width: 8px;
  height: 8px;
}

.dialog footer {
  display: flex;
  justify-content: center;
  gap: 5px;
  padding: 1px 0;
}

.push {
  width: 23px;
  height: 11px;
  border: 1px solid #c3c7cb;
  border-radius: 1px;
  background: #f7f8f9;
  color: #222;
}

.push.primary {
  border-color: #9cd0ea;
  background: #a3dcf8;
}

.pick {
  width: 56px;
}

.pick h2 {
  color: #aaa;
}

.pick p {
  padding: 0 2px;
  line-height: 9px;
}
```
